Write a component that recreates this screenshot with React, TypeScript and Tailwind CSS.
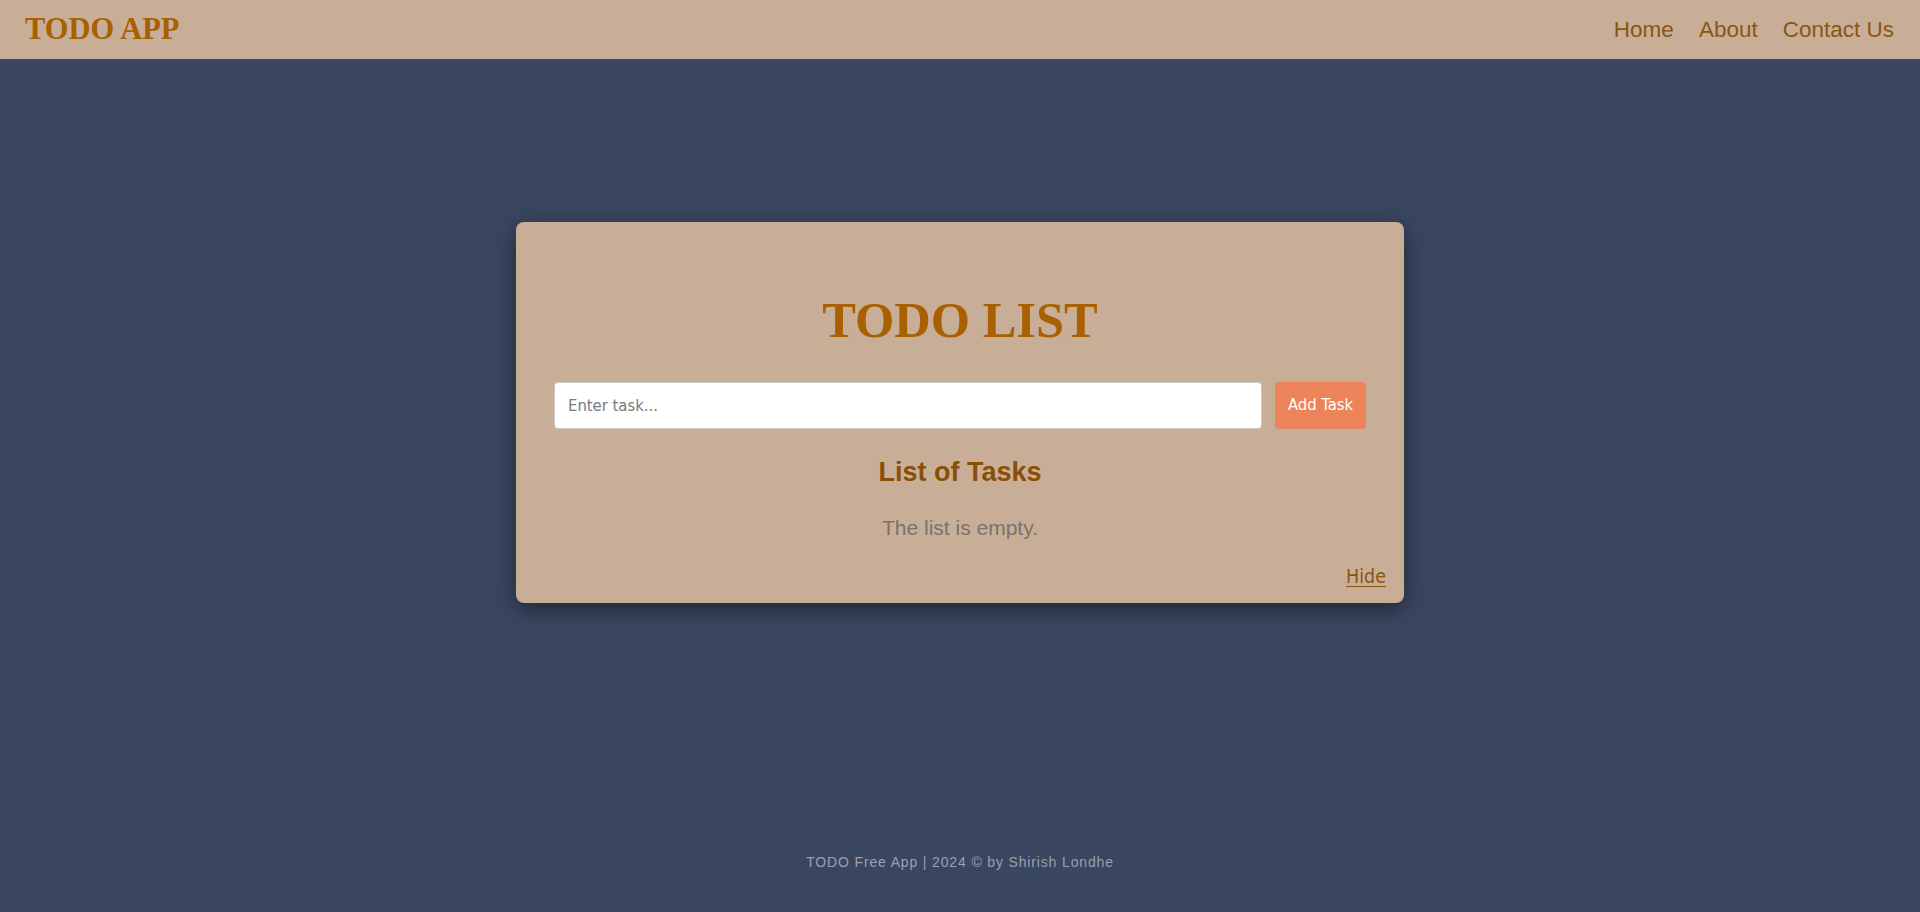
import { useState } from 'react';

export function App() {
  const [task, setTask] = useState('');

  return (
    <div className="min-h-screen flex flex-col bg-[#3a4660]">
      <nav className="h-[59px] flex items-center justify-between bg-[#c8ae97] pl-[25px] pr-[26px]">
        <div className="font-['Liberation_Serif',serif] font-bold text-[30.5px] leading-none text-[#a86000]">
          TODO APP
        </div>
        <ul className="flex items-center gap-[25px] font-['Liberation_Sans',Arial,sans-serif] text-[22.5px] text-[#8b5512]">
          <li>Home</li>
          <li>About</li>
          <li>Contact Us</li>
        </ul>
      </nav>

      <main className="flex justify-center pt-[163px]">
        <div className="w-[888px] rounded-lg bg-[#c8ae97] px-[18px] pt-[73px] pb-[14px] shadow-[0_6px_22px_rgba(0,0,0,0.45)]">
          <div className="px-5">
            <h1 className="text-center font-['Liberation_Serif',serif] font-bold text-[50.5px] leading-none text-[#a86000]">
              TODO LIST
            </h1>
            <div className="mt-[36px] flex gap-[13px] font-['DejaVu_Sans_Condensed','DejaVu_Sans',sans-serif] text-[16.5px]">
              <input
                value={task}
                onChange={(e) => setTask(e.target.value)}
                placeholder="Enter task..."
                className="h-[47px] flex-1 rounded bg-white border border-[#c9c9c9] px-[13px] text-[#333] placeholder:text-[#7a7a80] outline-none"
              />
              <button className="h-[47px] w-[91px] rounded bg-[#ed8359] text-white">
                Add Task
              </button>
            </div>
            <h2 className="mt-[30px] text-center font-['Liberation_Sans',Arial,sans-serif] font-bold text-[27px] leading-none text-[#8a4f06]">
              List of Tasks
            </h2>
            <p className="mt-[31px] text-center font-['Liberation_Sans',Arial,sans-serif] text-[21px] leading-none text-[#77726e]">
              The list is empty.
            </p>
          </div>
          <div className="mt-[27px] text-right">
            <a className="font-['DejaVu_Sans_Condensed','DejaVu_Sans',sans-serif] text-[19.5px] leading-none text-[#8b5512] underline underline-offset-[3px] cursor-pointer">
              Hide
            </a>
          </div>
        </div>
      </main>

      <footer className="mt-auto pb-[39px] text-center font-['Liberation_Sans',Arial,sans-serif] text-[14px] tracking-[0.85px] text-[#98a0b3]">
        TODO Free App | 2024 © by Shirish Londhe
      </footer>
    </div>
  );
}

export default App;
